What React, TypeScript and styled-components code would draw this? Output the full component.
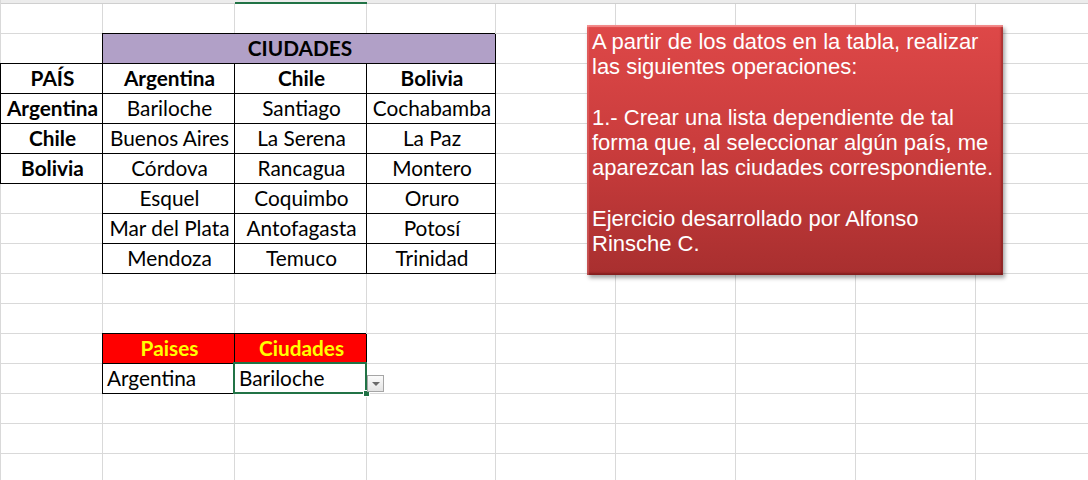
import React from "react";
import styled, { createGlobalStyle } from "styled-components";

const GlobalStyle = createGlobalStyle`
  html, body { margin: 0; padding: 0; background: #ffffff; }
  body { overflow: hidden; width: 1088px; height: 480px; }
`;

const COLS = [102, 132, 132, 129, 120, 120, 120, 120, 120];
const GRID = "#d9d9d9";
const GREEN = "#217346";

const Page = styled.div`
  position: relative;
  width: 1088px;
  height: 480px;
  overflow: hidden;
  font-family: "Lato", "Open Sans", sans-serif;
`;

const HeaderStrip = styled.div`
  display: grid;
  grid-template-columns: ${COLS.map((c) => c + "px").join(" ")};
  height: 4px;
  border-left: 1px solid ${GRID};
`;

const HeaderCell = styled.div<{ $active?: boolean }>`
  box-sizing: border-box;
  height: 4px;
  background: #ececec;
  border-bottom: ${(p) => (p.$active ? `2px solid ${GREEN}` : "1px solid #cfcfcf")};
`;

const Sheet = styled.div`
  display: grid;
  grid-template-columns: ${COLS.map((c) => c + "px").join(" ")};
  grid-auto-rows: 30px;
  border-left: 1px solid ${GRID};
`;

type CellProps = {
  $bold?: boolean;
  $bg?: string;
  $color?: string;
  $align?: "left" | "center";
  $boxed?: boolean;
  $span?: number;
  $selected?: boolean;
};

const Cell = styled.div<CellProps>`
  box-sizing: border-box;
  position: ${(p) => (p.$selected ? "relative" : "static")};
  grid-column: ${(p) => (p.$span ? `span ${p.$span}` : "auto")};
  display: flex;
  align-items: flex-end;
  justify-content: ${(p) => (p.$align === "left" ? "flex-start" : "center")};
  padding: 0 2px 3px 4px;
  background: ${(p) => p.$bg || "#ffffff"};
  color: ${(p) => p.$color || "#000000"};
  font-size: 20.8px;
  line-height: 24px;
  font-weight: ${(p) => (p.$bold ? 700 : 400)};
  white-space: nowrap;
  border-right: 1px solid ${(p) => (p.$boxed ? "#000" : GRID)};
  border-bottom: 1px solid ${(p) => (p.$boxed ? "#000" : GRID)};
  box-shadow: ${(p) =>
    p.$boxed ? "-1px -1px 0 0 #000, -1px 0 0 0 #000" : "none"};

  ${(p) =>
    p.$selected
      ? `
    &::after {
      content: "";
      position: absolute;
      left: -2px;
      top: -2px;
      right: -1px;
      bottom: -1px;
      border: 2px solid ${GREEN};
      pointer-events: none;
    }
  `
      : ""}
`;

const FillHandle = styled.div`
  position: absolute;
  right: -4px;
  bottom: -4px;
  width: 5px;
  height: 5px;
  background: ${GREEN};
  border: 1px solid #ffffff;
  z-index: 2;
`;

const DropButton = styled.div`
  position: absolute;
  left: calc(100% + 1px);
  top: 11px;
  box-sizing: border-box;
  width: 17px;
  height: 17px;
  border: 1px solid #a6a6a6;
  background: linear-gradient(#fbfbfb, #e4e4e4);
  display: flex;
  align-items: center;
  justify-content: center;
  z-index: 2;
`;

const Arrow = styled.div`
  width: 0;
  height: 0;
  border-left: 4px solid transparent;
  border-right: 4px solid transparent;
  border-top: 4px solid #6a6a6a;
  margin-top: 1px;
`;

const NoteBox = styled.div`
  position: absolute;
  left: 587px;
  top: 25px;
  width: 416px;
  height: 250px;
  box-sizing: border-box;
  padding: 4px 5px;
  background: linear-gradient(180deg, #de4848 0%, #c93c3c 50%, #a82f2f 100%);
  box-shadow: inset 0 2px 1px rgba(255, 170, 170, 0.7),
    inset 2px 0 1px rgba(255, 140, 140, 0.35),
    inset 0 -2px 2px rgba(90, 10, 10, 0.45),
    inset -2px 0 2px rgba(90, 10, 10, 0.35),
    2px 3px 4px rgba(0, 0, 0, 0.35);
  color: #ffffff;
  font-family: "Liberation Sans", Arial, sans-serif;
  font-size: 22px;
  line-height: 25.3px;
  z-index: 3;
`;

const NoteLine = styled.div`
  white-space: nowrap;
`;

type CellDef = {
  text?: string;
  bold?: boolean;
  bg?: string;
  color?: string;
  align?: "left" | "center";
  boxed?: boolean;
  span?: number;
  selected?: boolean;
};

const E = (n: number): CellDef[] => Array.from({ length: n }, () => ({}));
const H = (text: string): CellDef => ({ text, bold: true, boxed: true });
const D = (text: string): CellDef => ({ text, boxed: true });
const RED: CellDef = { bold: true, bg: "#ff0000", color: "#ffff00", boxed: true };

const rows: CellDef[][] = [
  E(9),
  [{}, { text: "CIUDADES", bold: true, bg: "#b1a0c7", boxed: true, span: 3 }, ...E(5)],
  [H("PAÍS"), H("Argentina"), H("Chile"), H("Bolivia"), ...E(5)],
  [H("Argentina"), D("Bariloche"), D("Santiago"), D("Cochabamba"), ...E(5)],
  [H("Chile"), D("Buenos Aires"), D("La Serena"), D("La Paz"), ...E(5)],
  [H("Bolivia"), D("Córdova"), D("Rancagua"), D("Montero"), ...E(5)],
  [{}, D("Esquel"), D("Coquimbo"), D("Oruro"), ...E(5)],
  [{}, D("Mar del Plata"), D("Antofagasta"), D("Potosí"), ...E(5)],
  [{}, D("Mendoza"), D("Temuco"), D("Trinidad"), ...E(5)],
  E(9),
  E(9),
  [{}, { ...RED, text: "Paises" }, { ...RED, text: "Ciudades" }, ...E(6)],
  [
    {},
    { text: "Argentina", align: "left", boxed: true },
    { text: "Bariloche", align: "left", selected: true },
    ...E(6),
  ],
  E(9),
  E(9),
  E(9),
];

const noteLines = [
  "A partir de los datos en la tabla, realizar",
  "las siguientes operaciones:",
  "\u00a0",
  "1.- Crear una lista dependiente de tal",
  "forma que, al seleccionar algún país, me",
  "aparezcan las ciudades correspondiente.",
  "\u00a0",
  "Ejercicio desarrollado por Alfonso",
  "Rinsche C.",
];

export default function App() {
  return (
    <>
      <GlobalStyle />
      <Page>
        <HeaderStrip>
          {COLS.map((_, i) => (
            <HeaderCell key={i} $active={i === 2} />
          ))}
        </HeaderStrip>
        <Sheet>
          {rows.map((row, r) =>
            row.map((c, i) => (
              <Cell
                key={`${r}-${i}`}
                $bold={c.bold}
                $bg={c.bg}
                $color={c.color}
                $align={c.align}
                $boxed={c.boxed}
                $span={c.span}
                $selected={c.selected}
              >
                {c.text}
                {c.selected && (
                  <>
                    <FillHandle />
                    <DropButton>
                      <Arrow />
                    </DropButton>
                  </>
                )}
              </Cell>
            ))
          )}
        </Sheet>
        <NoteBox>
          {noteLines.map((l, i) => (
            <NoteLine key={i}>{l}</NoteLine>
          ))}
        </NoteBox>
      </Page>
    </>
  );
}
